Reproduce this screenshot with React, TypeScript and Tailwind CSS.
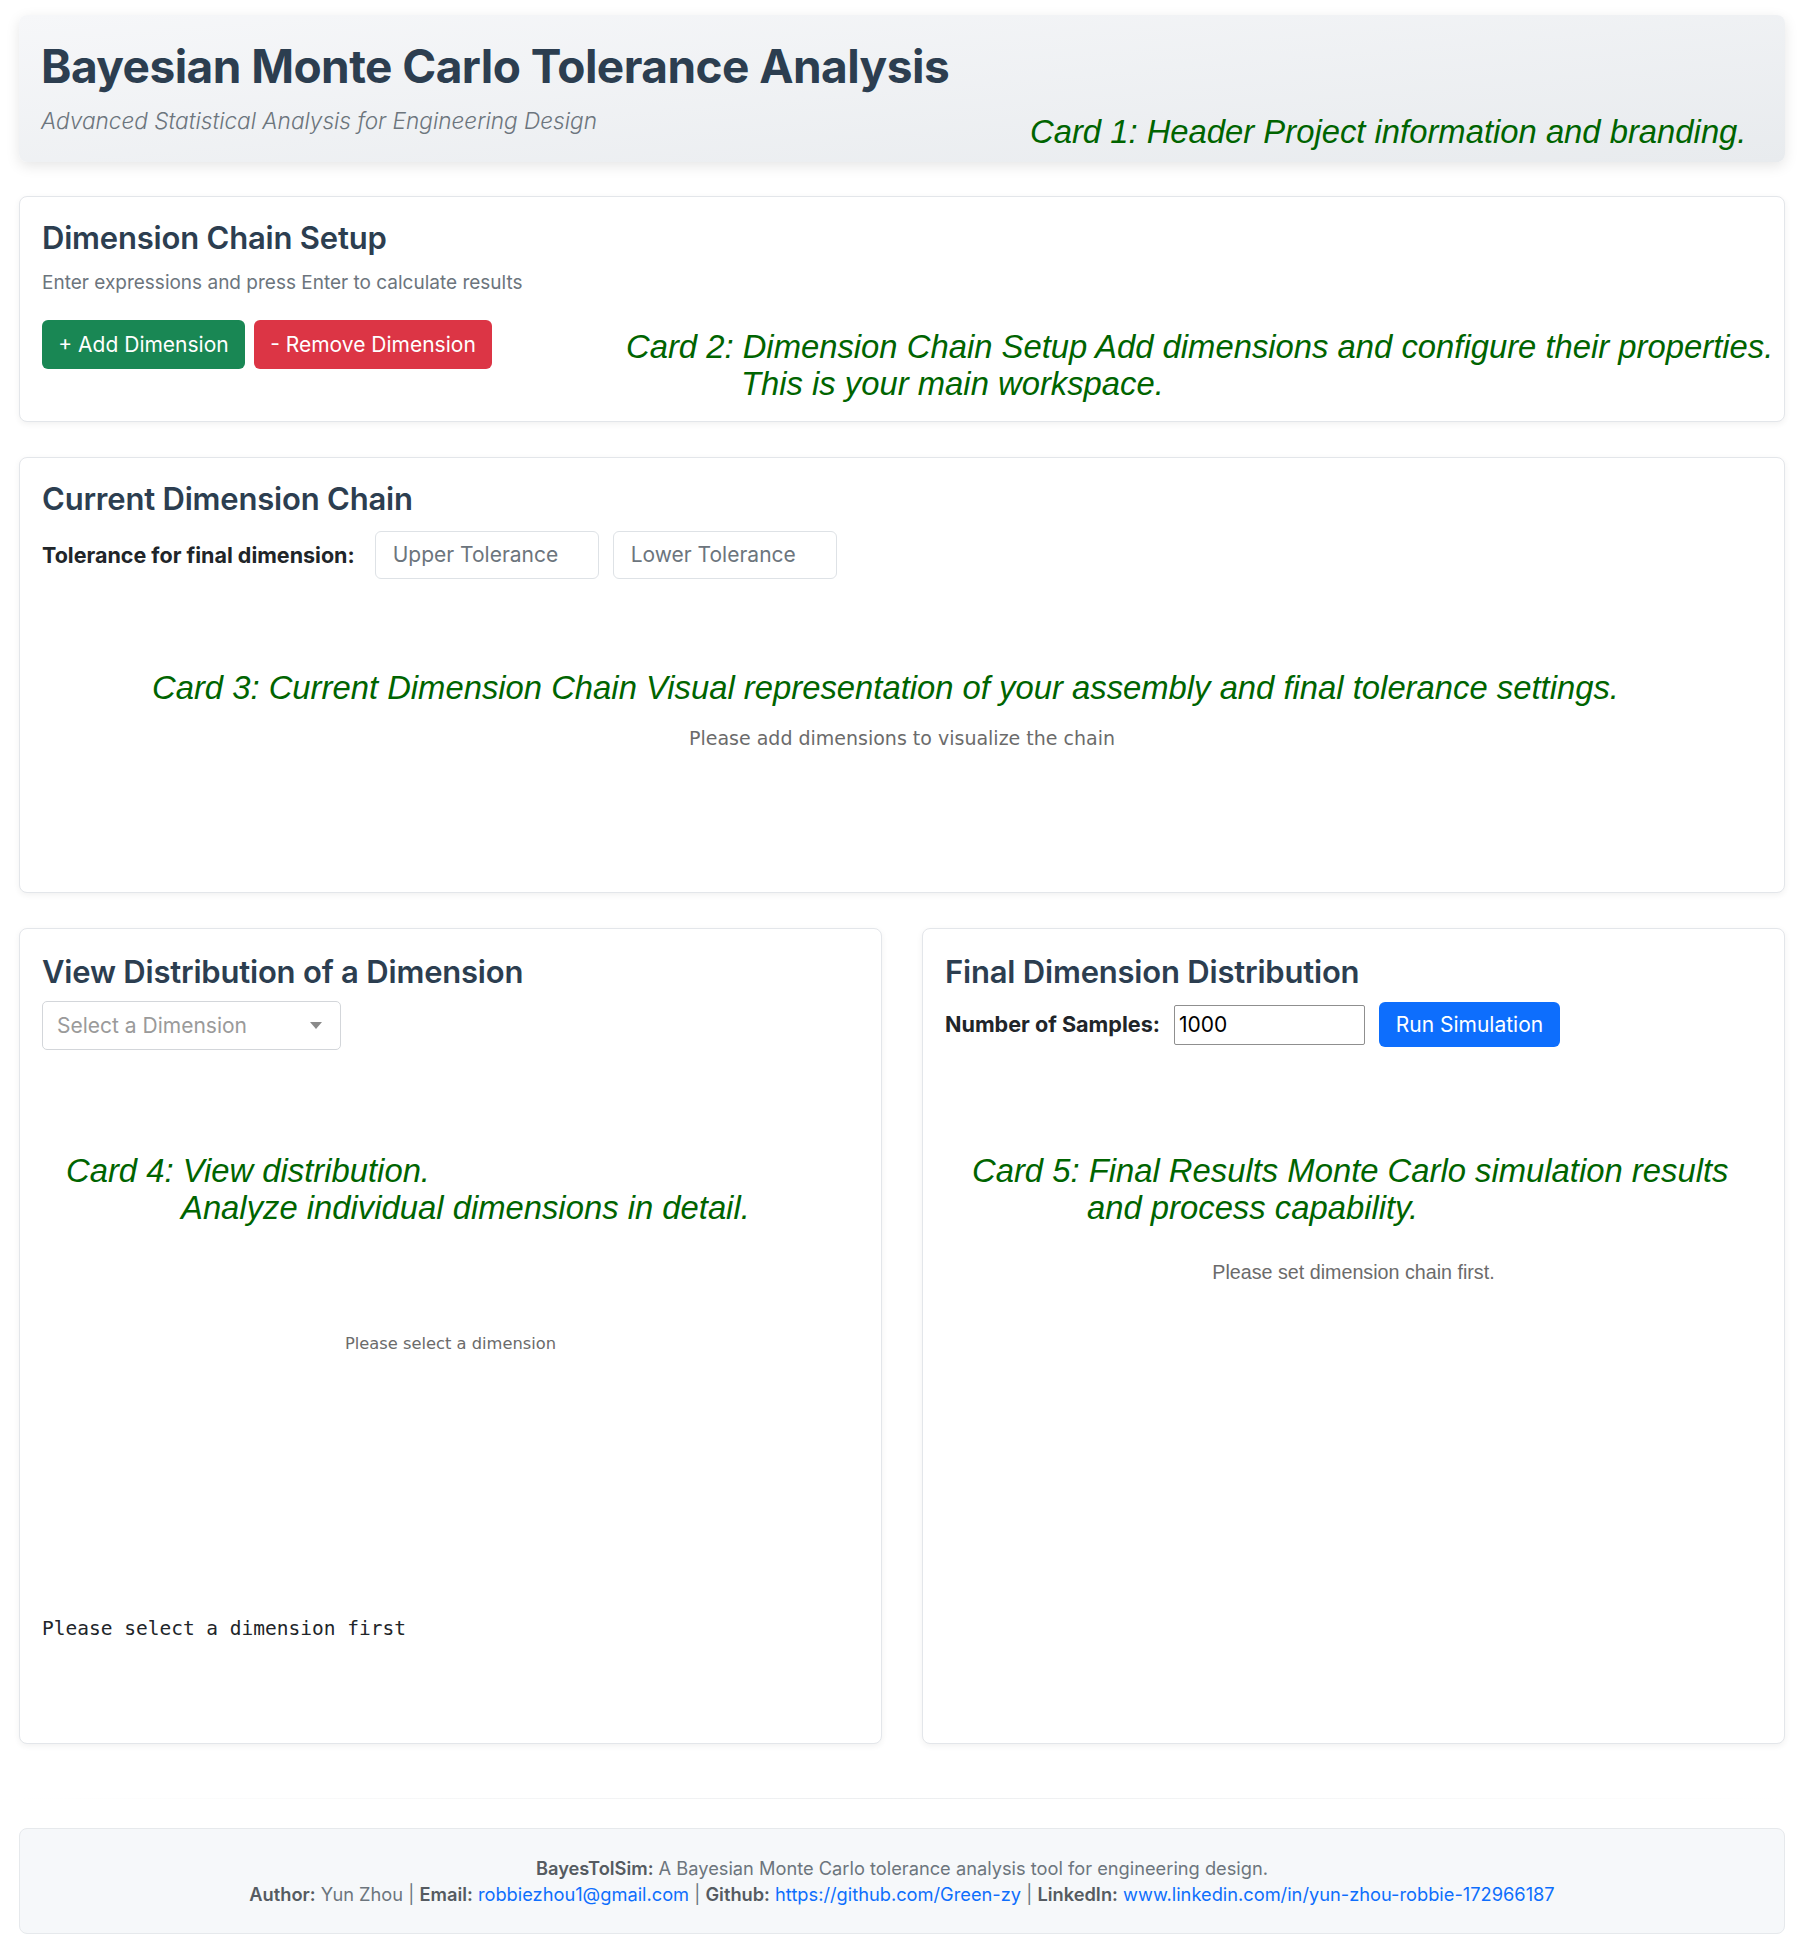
import React from "react";

const ui = "font-['Inter','Noto_Sans',sans-serif]";
const note = "font-['Liberation_Sans',Arial,sans-serif] italic text-[32.8px] leading-[37px] text-[#006400] whitespace-nowrap";

function Note({ lines, className }: { lines: string[]; className: string }) {
  return (
    <div className={`absolute ${note} ${className}`}>
      <div>{lines[0]}</div>
      {lines[1] && <div className="pl-[115px]">{lines[1]}</div>}
    </div>
  );
}

function Card({ children, className = "" }: { children: React.ReactNode; className?: string }) {
  return (
    <div className={`relative bg-white border border-[#e3e6ea] rounded-lg shadow-[0_2px_6px_rgba(0,0,0,0.06)] ${className}`}>
      {children}
    </div>
  );
}

function CardTitle({ children }: { children: React.ReactNode }) {
  return <h2 className="text-[31px] leading-[37px] font-semibold text-[#2c3e50] tracking-[-0.2px]">{children}</h2>;
}

export default function App() {
  return (
    <div className={`${ui} bg-white min-h-[1954px] px-[19px] pt-[15px] text-[#212529]`}>
      {/* Header */}
      <header className="relative h-[147px] rounded-lg bg-gradient-to-br from-[#f6f7f9] to-[#e8ebee] shadow-[0_4px_14px_rgba(0,0,0,0.10)] px-[22px] pt-[23px]">
        <h1 className="text-[46px] leading-[56px] font-bold text-[#2c3e50] tracking-[-0.55px]">
          Bayesian Monte Carlo Tolerance Analysis
        </h1>
        <p className="mt-[13px] text-[22.6px] leading-[28px] italic font-light text-[#6c757d]">
          Advanced Statistical Analysis for Engineering Design
        </p>
        <Note className="left-[1011px] top-[98px]" lines={["Card 1: Header Project information and branding."]} />
      </header>

      {/* Dimension chain setup */}
      <Card className="mt-[34px] h-[226px] px-[22px] pt-[22px]">
        <CardTitle>Dimension Chain Setup</CardTitle>
        <p className="mt-[13px] text-[19px] leading-[27px] text-[#6c757d]">
          Enter expressions and press Enter to calculate results
        </p>
        <div className="mt-[24px] flex gap-[9px]">
          <button className="h-[49px] w-[203px] rounded-md bg-[#198754] text-white text-[21px]">+ Add Dimension</button>
          <button className="h-[49px] w-[238px] rounded-md bg-[#dc3545] text-white text-[21px]">- Remove Dimension</button>
        </div>
        <Note
          className="left-[606px] top-[131px]"
          lines={[
            "Card 2: Dimension Chain Setup Add dimensions and configure their properties.",
            "This is your main workspace.",
          ]}
        />
      </Card>

      {/* Current dimension chain */}
      <Card className="mt-[35px] h-[436px] px-[22px] pt-[22px]">
        <CardTitle>Current Dimension Chain</CardTitle>
        <div className="mt-[14px] flex items-center gap-[14px]">
          <span className="text-[21.5px] font-bold text-[#212529] mr-[6px]">Tolerance for final dimension:</span>
          <div className="h-[48px] w-[224px] rounded-md border border-[#dee2e6] flex items-center px-[17px] text-[21px] text-[#6c757d]">
            Upper Tolerance
          </div>
          <div className="h-[48px] w-[224px] rounded-md border border-[#dee2e6] flex items-center px-[17px] text-[21px] text-[#6c757d]">
            Lower Tolerance
          </div>
        </div>
        <div className="mt-[12px] h-[295px] flex items-center justify-center font-['DejaVu_Sans',Verdana,sans-serif] text-[19px] text-[#6b6b6b]">
          Please add dimensions to visualize the chain
        </div>
        <Note
          className="left-[132px] top-[211px]"
          lines={["Card 3: Current Dimension Chain Visual representation of your assembly and final tolerance settings."]}
        />
      </Card>

      {/* Distribution cards */}
      <div className="mt-[35px] grid grid-cols-2 gap-[40px]">
        <Card className="h-[816px] px-[22px] pt-[24px]">
          <CardTitle>View Distribution of a Dimension</CardTitle>
          <div className="mt-[11px] h-[49px] w-[299px] rounded-[5px] border border-[#d3d6da] flex items-center justify-between pl-[14px] pr-[18px] text-[21px] text-[#9a9a9a]">
            <span>Select a Dimension</span>
            <svg width="12" height="7" viewBox="0 0 12 7">
              <path d="M0 0 L12 0 L6 7 Z" fill="#8a8a8a" />
            </svg>
          </div>
          <div className="mt-[10px] h-[540px] flex justify-center pt-[273px] font-['DejaVu_Sans',Verdana,sans-serif] text-[16.3px] leading-[22px] text-[#6b6b6b]">
            Please select a dimension
          </div>
          <pre className="mt-[17px] font-['DejaVu_Sans_Mono',Menlo,monospace] text-[19.5px] leading-[24px] text-[#212529]">
            Please select a dimension first
          </pre>
          <Note
            className="left-[46px] top-[223px]"
            lines={["Card 4: View distribution.", "Analyze individual dimensions in detail."]}
          />
        </Card>

        <Card className="h-[816px] px-[22px] pt-[24px]">
          <CardTitle>Final Dimension Distribution</CardTitle>
          <div className="mt-[12px] flex items-center">
            <span className="text-[21.6px] font-bold text-[#212529]">Number of Samples:</span>
            <div className="ml-[14px] h-[40px] w-[191px] rounded-[2px] border border-[#8f8f8f] flex items-center px-[4px] text-[21px] text-black">
              1000
            </div>
            <button className="ml-[14px] h-[45px] w-[181px] rounded-md bg-[#0d6efd] text-white text-[21px]">Run Simulation</button>
          </div>
          <div className="mt-[10px] flex justify-center pt-[203px] font-['Liberation_Sans',Arial,sans-serif] text-[19.7px] leading-[24px] text-[#6b6b6b]">
            Please set dimension chain first.
          </div>
          <Note
            className="left-[49px] top-[223px]"
            lines={["Card 5: Final Results Monte Carlo simulation results", "and process capability."]}
          />
        </Card>
      </div>

      <div className="mt-[54px] h-px bg-gradient-to-r from-transparent via-[#eceef0] to-transparent" />

      {/* Footer */}
      <footer className="mt-[29px] h-[106px] rounded-lg bg-[#f6f8fa] border border-[#e6e9ec] flex flex-col items-center justify-center text-[18.25px] leading-[26px] text-[#6c757d]">
        <p>
          <b className="font-semibold text-[#555b61]">BayesTolSim:</b> A Bayesian Monte Carlo tolerance analysis tool for engineering design.
        </p>
        <p>
          <b className="font-semibold text-[#555b61]">Author:</b> Yun Zhou | <b className="font-semibold text-[#555b61]">Email:</b>{" "}
          <a className="text-[#0d6efd]">robbiezhou1@gmail.com</a> | <b className="font-semibold text-[#555b61]">Github:</b>{" "}
          <a className="text-[#0d6efd]">https://github.com/Green-zy</a> | <b className="font-semibold text-[#555b61]">LinkedIn:</b>{" "}
          <a className="text-[#0d6efd]">www.linkedin.com/in/yun-zhou-robbie-172966187</a>
        </p>
      </footer>
    </div>
  );
}
